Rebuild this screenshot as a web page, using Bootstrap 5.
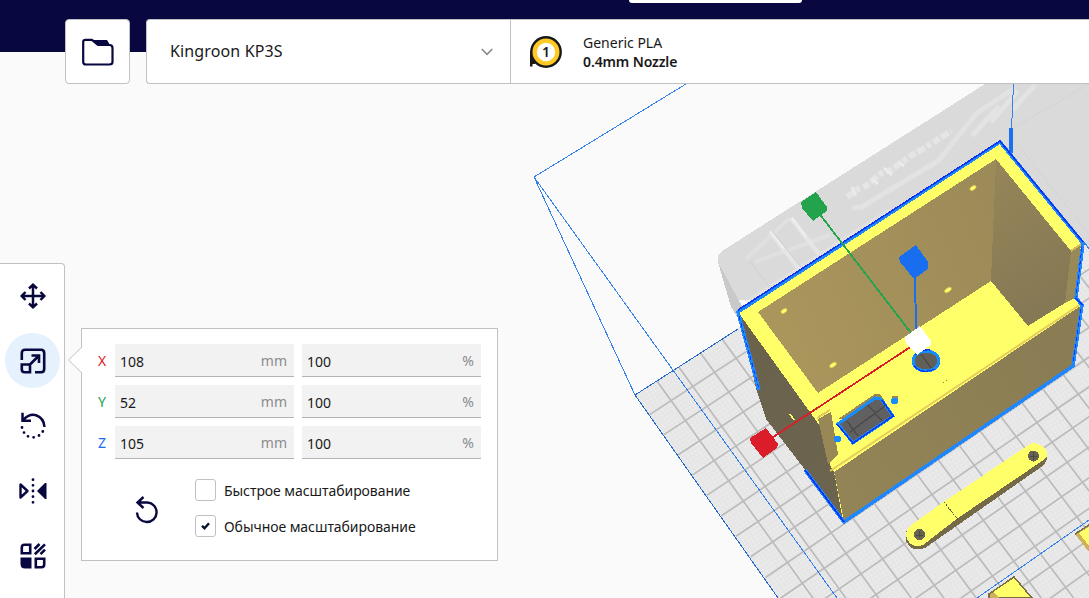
<!DOCTYPE html>
<html lang="ru">
<head>
<meta charset="utf-8">
<title>Kingroon KP3S</title>
<link href="https://cdn.jsdelivr.net/npm/bootstrap@5.3.0/dist/css/bootstrap.min.css" rel="stylesheet">
<style>
:root{--ink:#08073f;--line:#c0c1c2}
body{font-family:"Noto Sans",sans-serif;font-size:14px;line-height:19px;color:#191919;background:#fafafa;height:598px;width:1089px}
.scene{position:absolute;inset:0;z-index:0}
.topbar{position:relative;z-index:1;height:84px;padding:19px 0 0 65px;background:linear-gradient(var(--ink) 52px,transparent 52px)}
.stage-tab{position:absolute;left:629px;top:0;width:173px;height:3px;background:#fff;border-radius:0 0 3px 3px}
.open-btn{width:65px;height:65px;border:1px solid var(--line);border-radius:4px;background:#fff;margin-right:16px;padding:0 0 0}
.printer{width:364px;height:65px;border:1px solid var(--line);border-right:0;border-radius:4px 0 0 4px;background:#fff;padding:0 17px 0 23px;font-size:16px;letter-spacing:.13px}
.material{height:65px;border:1px solid var(--line);border-right:0;background:#fff;padding-left:18px}
.material .desc{margin-left:20px;font-size:14px}
.material .fw-semibold{letter-spacing:-.12px}
.workspace{position:relative;z-index:1}
.tools{width:65px;height:335px;margin-top:179px;border:1px solid var(--line);border-left:0;border-bottom:0;border-radius:0 4px 0 0;background:#fff;padding-top:4px}
.tool{width:55px;height:55px;margin:0 0 10px 5px;border:0;border-radius:50%;padding:0;background:none}
.tool.active{background:#e5f1fc}
.scale-panel{position:relative;width:417px;height:233px;margin:244px 0 0 16px;border:1px solid var(--line);background:#fff;padding:15px 16px}
.arrow{position:absolute;left:-14px;top:18px}
.axis-row{height:33px;margin-bottom:8px}
.axis{width:17px;font-size:14px}
.axis.x{color:#da1d28}.axis.y{color:#22a34c}.axis.z{color:#196ef0}
.field{width:179px;height:33px;background:#f2f2f2;border-bottom:1px solid #b3b3b3;padding:2px 7px 0 5px}
.field + .field{margin-left:8px}
.field .unit{color:#8b8c8e;font-size:14px;padding-bottom:2px}
.options{padding-top:12px}
.opt{height:22px;margin-bottom:14px;letter-spacing:-.06px}
.box{width:21px;height:22px;border:1px solid var(--line);border-radius:3px;margin-right:8px}
.reset{margin:17px 35px 0 36px}
</style>
</head>
<body class="position-relative overflow-hidden">

<svg class="scene" width="1089" height="598" viewBox="0 0 1089 598" shape-rendering="crispEdges" fill="none">
  <defs>
    <pattern id="mesh" width="4" height="4" patternUnits="userSpaceOnUse" patternTransform="rotate(-33)"><rect width="4" height="4" fill="#e6e6e6"/><path d="M0 0H2V2H0z" fill="#ececec"/></pattern>
    <linearGradient id="back" x1="760" y1="320" x2="1000" y2="220" gradientUnits="userSpaceOnUse"><stop stop-color="#ab975c"/><stop offset="1" stop-color="#9c8a58"/></linearGradient>
    <linearGradient id="side" x1="995" y1="180" x2="1070" y2="290" gradientUnits="userSpaceOnUse"><stop stop-color="#948458"/><stop offset="1" stop-color="#857854"/></linearGradient>
    <linearGradient id="left" x1="750" y1="330" x2="850" y2="500" gradientUnits="userSpaceOnUse"><stop stop-color="#6b624c"/><stop offset="1" stop-color="#6b644f"/></linearGradient>
    <linearGradient id="front" x1="840" y1="490" x2="1070" y2="340" gradientUnits="userSpaceOnUse"><stop stop-color="#938457"/><stop offset="1" stop-color="#8a7c53"/></linearGradient>
  </defs>
  <path d="M635 395L1012 150L1089 249V598H778z" fill="url(#mesh)"/>
  <g id="grid" stroke="#bbb" stroke-width="1.7" shape-rendering="auto"></g>
  <path d="M738 329L635 395L778 598" stroke="#2468c8"/>

  <!-- model outside the printable volume -->
  <path d="M718 262Q716 256 722 251L985 84H1089V250L1012 152L900 300H738z" fill="#dadada"/>
  <path d="M1012 140V155L1089 250V84H1000z" fill="#dadada"/>
  <path d="M718 262L743 308L738 318L731 307z" fill="#c9c9c9"/>
  <g shape-rendering="auto" stroke="#e5e5e5">
    <path d="M746 259L790 218M746 302L890 210M755 262L830 235" stroke-width="4" opacity=".55"/>
    <path d="M770 232L799 269M791 218L819 254" stroke-width="4.5"/>
    <path d="M770 231L784 249M792 218L806 237" stroke="#efefef" stroke-width="2"/>
    <path d="M772 231L801 267M750 261L770 288" stroke="#d0d0d0"/>
    <path d="M852 208L862 207L888 191L938 161L977 113L1015 88" stroke-width="5" opacity=".7"/>
    <path d="M972 136L999 106M991 122L1018 91M1012 110L1035 85" stroke-width="5" opacity=".8"/>
    <path d="M847 197L858 189L866 186L880 174L889 171L902 162L912 155L926 147L951 131" stroke-width="6" stroke-dasharray="9 2 5 3 7 2" opacity=".9"/>
    <path d="M852 187L856 196M872 179L878 184M884 168L892 175M899 162L904 166" stroke="#ebebeb" stroke-width="3"/>
    <path d="M1011 130L1088 84M1014 140L1089 234" stroke="#cfcfcf" stroke-dasharray="2 2"/>
  </g>

  <path d="M686 84L534 177L635 395M534 177L837 598M977 598L1089 520M1085 243L1089 249" stroke="#3480ec"/>
  <path d="M1013.5 84L1011.5 130" stroke="#3480ec"/>
  <path d="M1011 128V153" stroke="#1b6ff0" stroke-width="4"/>

  <!-- enclosure -->
  <path d="M738 312L765 409L843 521L1074 366L1082 305L1076 298L1083 243L1000 142z" fill="#ffff6a"/>
  <path d="M738 312L830 440V465L834 472L843 521L806 471L766 419L756 388z" fill="url(#left)"/>
  <path d="M740 311L760 309L820 392L831 411L818 419z" fill="#ffff6a"/>
  <path d="M758 312L996 159L991 281L818 393z" fill="url(#back)"/>
  <path d="M996 159L1071 251L1065 303L1028 326L991 281z" fill="url(#side)"/>
  <path d="M1071 251L1081 244L1075 298L1065 303z" fill="#988958"/>
  <path d="M1071 251L1081 244" stroke="#d7b955" stroke-width="2"/>
  <path d="M834 472L1082 305L1073 365L844 521z" fill="url(#front)"/>
  <path d="M830 471L1081 304" stroke="#e6cb5b" stroke-width="2" shape-rendering="auto"/>
  <path d="M818 419L831 412L838 454L828 464z" fill="#988856"/>
  <path d="M817 418L830 410" stroke="#e3c95c" stroke-width="2"/>
  <path d="M790 414L794 420" stroke="#ffff6a" stroke-width="1.5"/>
  <g fill="#ffff6a" stroke="#cdb24d" stroke-width=".7" shape-rendering="auto">
    <ellipse cx="784" cy="311" rx="3.5" ry="2" transform="rotate(-33 784 311)"/><ellipse cx="973" cy="188" rx="3.5" ry="2" transform="rotate(-33 973 188)"/><ellipse cx="948" cy="290" rx="4" ry="2" transform="rotate(-33 948 290)"/><ellipse cx="833" cy="365" rx="4" ry="2" transform="rotate(-33 833 365)"/>
  </g>
  <g stroke="#1e86ff" stroke-width="3.5" stroke-linejoin="round">
    <path d="M759 390L738 312L1000 142L1083 243L1076 298L1082 305L1073 366L844 522L805 470"/>
    <path d="M738 310L1000 141L1083 242M1076 298L1082 305M844 522L805 470" stroke="#0a34ee" stroke-width="1.6"/>
    <path d="M739 316L759 389M1082 247L1076 297M1081 309L1073 364" stroke="#0b3cf4" stroke-width="1" stroke-dasharray="4 3"/>
  </g>
  <path d="M838 419L875 394H880L889 408L860 420z" fill="#9a8850"/>
  <path d="M838 424L875 398L881 399L893 416L853 443z" fill="#606060" stroke="#168cff" stroke-width="3"/>
  <path d="M847 421L858 436M868 405L882 421M850 432L885 406" stroke="#4c4c4c" stroke-width="1.6"/>
  <path d="M837 424L853 443L893 416L882 400" stroke="#0638f0" stroke-width="1.5"/>
  <ellipse cx="926" cy="361" rx="13" ry="10" fill="#625f58" stroke="#168cff" stroke-width="3"/>
  <path d="M914 365Q921 375 935 369M915 355Q921 349 930 350" stroke="#0638f0" stroke-width="1.2"/>
  <path d="M921 354L931 368" stroke="#4c4c4c" stroke-width="1.6"/>
  <path d="M891.500 396h6v4h-6z" fill="#9a8850"/><circle cx="894.500" cy="401" r="3.3" fill="#168cff"/><circle cx="837.500" cy="439" r="3.3" fill="#168cff"/>
  <path d="M943 383L953 376" stroke="#948037" stroke-dasharray="1 3"/>

  <!-- scale handles -->
  <path d="M764 443L918 342" stroke="#da1d28" stroke-width="1.8"/>
  <path d="M815 208L918 342" stroke="#22a34c" stroke-width="1.8"/>
  <path d="M914 264L917 342" stroke="#196ef0" stroke-width="2"/>
  <path d="M750 438L766 428L778 444L777 448L763 458L751 443z" fill="#da1d28"/>
  <path d="M801 202L816 192L827 207V211L813 221L802 208z" fill="#22a34c"/>
  <path d="M899 257L916 245L928 262V269L914 279L900 262z" fill="#196ef0"/>
  <path d="M905 337L920 326L931 341V345L917 355L906 344z" fill="#fff"/>

  <!-- bracket -->
  <path d="M910 527L945 502L1030 445Q1041 441 1047 453V459L1044 465L925 548Q912 553 906 541V532z" fill="#756a48"/>
  <path d="M910 526L945 501L1030 444Q1041 441 1047 452V456L1042 461L958 518L923 545Q912 549 907 539Q904 532 910 526z" fill="#ffff6a"/>
  <path d="M944 502L959 521" stroke="#625930" stroke-dasharray="2 1"/>
  <circle cx="919.500" cy="534.500" r="5.500" fill="#66634e"/><circle cx="1033.500" cy="456" r="5.500" fill="#66634e"/>
  <path d="M916 535h7M919.500 531v6M1030 456h7M1033.500 452v8" stroke="#484848"/>
  <path d="M989 594L1014 577L1032 598H989z" fill="#ffff6a" stroke="#7a6e48" stroke-width="1.5"/><path d="M990 594L994 592L999 598H990z" fill="#ceb15a"/>
  <path d="M1075 534L1089 525V552z" fill="#ceb15a"/><path d="M1079 533L1089 527V546z" fill="#ffff6a"/><path d="M1075 534L1089 525" stroke="#7a6e48" stroke-width="1.5"/>
</svg>

<header class="topbar d-flex align-items-start">
  <div class="stage-tab"></div>
  <button class="open-btn d-flex align-items-center justify-content-center flex-shrink-0" aria-label="Open">
    <svg width="34" height="30" viewBox="0 0 34 30" fill="none"><path d="M4.500 2.800H11L17 8H28.500Q31.500 8 31.500 11V25Q31.500 27.500 28.500 27.500H5Q2.200 27.500 2.200 25V5Q2.200 2.800 4.500 2.800z" stroke="#08073f" stroke-width="2.2" stroke-linejoin="round"/><path d="M11 3H26L29 8H17z" fill="#08073f"/></svg>
  </button>
  <div class="printer d-flex align-items-center justify-content-between flex-shrink-0">
    <span>Kingroon KP3S</span>
    <svg width="12" height="8" viewBox="0 0 12 8" fill="none"><path d="M.7 1L6 6.3L11.3 1" stroke="#88898b" stroke-width="1.6"/></svg>
  </div>
  <div class="material d-flex align-items-center flex-grow-1">
    <svg width="34" height="34" viewBox="0 0 34 34"><path d="M1 16H6V29H3.500V31.500H1z" fill="#191919"/><circle cx="17" cy="17" r="14.700" fill="#ffc924" stroke="#191919" stroke-width="2.4"/><circle cx="17" cy="17" r="9.200" fill="#fff"/><text x="17" y="22" text-anchor="middle" font-family="Noto Sans" font-weight="600" font-size="14" fill="#191919">1</text></svg>
    <div class="desc"><div>Generic PLA</div><div class="fw-semibold">0.4mm Nozzle</div></div>
  </div>
</header>

<main class="workspace d-flex align-items-start">
  <nav class="tools flex-shrink-0">
    <button class="tool d-flex align-items-center justify-content-center" aria-label="Move"><svg width="28" height="28" viewBox="0 0 28 28" fill="none" stroke="#08073f" stroke-width="2.5"><path d="M14 3V25M3 14H25M10 6.500L14 2.700L18 6.500M10 21.500L14 25.300L18 21.500M6.500 10L2.700 14L6.500 18M21.500 10L25.300 14L21.500 18"/></svg></button>
    <button class="tool active d-flex align-items-center justify-content-center" aria-label="Scale"><svg width="28" height="28" viewBox="0 0 28 28" fill="none" stroke="#08073f" stroke-width="2.6"><path d="M2.800 13V6Q2.800 2.800 6 2.800H22Q25.200 2.800 25.200 6V22Q25.200 25.200 22 25.200H16M2.800 17.500H11V25.200H5.500Q2.800 25.200 2.800 22.500zM11 17.500L20 8.500M12.500 8.500H20V16"/></svg></button>
    <button class="tool d-flex align-items-center justify-content-center" aria-label="Rotate"><svg width="28" height="28" viewBox="0 0 28 28" fill="none" stroke="#08073f" stroke-width="2.5"><path d="M3.500 .8V8.800H12M4 8.300Q10 1.500 17 3.200Q25 6 25.500 15"/><path d="M3 15.500h.01M5 20.600h.01M9 24.300h.01M14.600 25.300h.01M20 23.500h.01M23.800 19.500h.01" stroke-linecap="round" stroke-width="2.8"/></svg></button>
    <button class="tool d-flex align-items-center justify-content-center" aria-label="Mirror"><svg width="30" height="28" viewBox="0 0 30 28" fill="none" stroke="#08073f" stroke-width="2.4"><path d="M2.500 7.500V20.500L9.500 14z" stroke-linejoin="round"/><path d="M28.500 6V22H27L19 14L27 6z" fill="#08073f" stroke="none"/><path d="M15 2.700v.01M15 8.300v.01M15 14v.01M15 19.700v.01M15 25.300v.01" stroke-linecap="round" stroke-width="2.8"/></svg></button>
    <button class="tool d-flex align-items-center justify-content-center" aria-label="Per model settings"><svg width="28" height="28" viewBox="0 0 28 28" fill="none" stroke="#08073f" stroke-width="2.6"><path d="M5.500 2.800H11.200V11.200H2.800V5.500Q2.800 2.800 5.500 2.800zM16.800 16.800H25.200V22.500Q25.200 25.200 22.500 25.200H16.800z"/><path d="M1.500 15.500H12.500V26.500H6Q1.500 26.500 1.500 22z" fill="#08073f" stroke="none"/><path d="M15.500 7L20.500 2M15.800 12.200L26 2.400M21.500 12.200L26 7.700"/></svg></button>
  </nav>

  <section class="scale-panel flex-shrink-0">
    <svg class="arrow" width="15" height="26" viewBox="0 0 15 26"><path d="M14 0L.5 13L14 26" fill="#fff" stroke="#c0c1c2"/><path d="M14.500 .5V25.500" stroke="#fff"/></svg>
    <div>
      <div class="axis-row d-flex align-items-center"><span class="axis x">X</span>
        <div class="field d-flex align-items-center justify-content-between"><span>108</span><span class="unit">mm</span></div><div class="field d-flex align-items-center justify-content-between"><span>100</span><span class="unit">%</span></div></div>
      <div class="axis-row d-flex align-items-center"><span class="axis y">Y</span>
        <div class="field d-flex align-items-center justify-content-between"><span>52</span><span class="unit">mm</span></div><div class="field d-flex align-items-center justify-content-between"><span>100</span><span class="unit">%</span></div></div>
      <div class="axis-row d-flex align-items-center"><span class="axis z">Z</span>
        <div class="field d-flex align-items-center justify-content-between"><span>105</span><span class="unit">mm</span></div><div class="field d-flex align-items-center justify-content-between"><span>100</span><span class="unit">%</span></div></div>
    </div>
    <div class="options d-flex align-items-start">
      <button class="reset btn p-0 border-0 lh-1" aria-label="Reset"><svg class="d-block" width="26" height="28" viewBox="0 0 26 28" fill="none" stroke="#08073f" stroke-width="2.4"><path d="M9.500 1L3.500 6.500L9.500 12M4 6.500H13.500A9.800 9.800 0 1 1 3 16.500"/></svg></button>
      <div>
        <div class="opt d-flex align-items-center"><span class="box"></span><span>Быстрое масштабирование</span></div>
        <div class="opt d-flex align-items-center"><span class="box d-flex align-items-center justify-content-center"><svg width="9" height="8" viewBox="0 0 9 8" fill="none"><path d="M1 3.800L3.500 6.200L8 1.200" stroke="#08142c" stroke-width="2.4"/></svg></span><span>Обычное масштабирование</span></div>
      </div>
    </div>
  </section>
</main>

<script src="https://cdn.jsdelivr.net/npm/bootstrap@5.3.0/dist/js/bootstrap.bundle.min.js"></script>
<script>
// Build plate: 18 x 18 cells in perspective, from four known cell corners [i, j, x, y]
const known = [[0,0,635,395],[18,0,1012,150],[0,9,765.5,577.5],[10,13,1040.7,511.3]];
const m = [];
for (const [i,j,x,y] of known) {
  m.push([i,j,1,0,0,0,-x*i,-x*j,x]);
  m.push([0,0,0,i,j,1,-y*i,-y*j,y]);
}
for (let c=0;c<8;c++) {
  let p=c; for (let r=c;r<8;r++) if (Math.abs(m[r][c])>Math.abs(m[p][c])) p=r;
  [m[c],m[p]]=[m[p],m[c]];
  for (let r=0;r<8;r++) if (r!==c) { const f=m[r][c]/m[c][c]; for (let k=c;k<9;k++) m[r][k]-=f*m[c][k]; }
}
const h = m.map((r,k)=>r[8]/r[k]);
const at = (i,j)=>{const w=h[6]*i+h[7]*j+1;return ((h[0]*i+h[1]*j+h[2])/w).toFixed(1)+' '+((h[3]*i+h[4]*j+h[5])/w).toFixed(1)};
let d='';
for (let k=1;k<18;k++) d+=`M${at(k,0)}L${at(k,18)}M${at(0,k)}L${at(18,k)}`;
// the grey model covers the plate behind the enclosure
document.getElementById('grid').innerHTML=`<path d="${d}"/>`;
</script>
</body>
</html>
